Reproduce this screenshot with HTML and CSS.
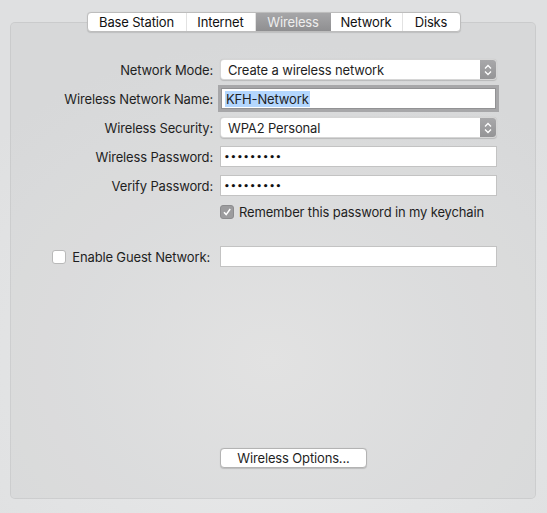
FILE: index.html
```html
<!DOCTYPE html>
<html>
<head>
<meta charset="utf-8">
<link rel="stylesheet" href="styles.css">
</head>
<body>
<div class="window">
  <div class="tabs">
    <div class="tab t-base">Base Station</div>
    <div class="tab t-internet">Internet</div>
    <div class="tab t-wireless active">Wireless</div>
    <div class="tab t-network">Network</div>
    <div class="tab t-disks last">Disks</div>
  </div>
  <div class="panel">
    <div class="form">
      <div class="label">Network Mode:</div>
      <div class="select">
        <span class="value">Create a wireless network</span>
        <span class="stepper"><svg width="8" height="12" viewBox="0 0 8 12"><path d="M1 4.5 L4 1.5 L7 4.5 M1 7.5 L4 10.5 L7 7.5" fill="none" stroke="#fff" stroke-width="1.3"/></svg></span>
      </div>

      <div class="label">Wireless Network Name:</div>
      <div class="field focus"><span class="sel">KFH-Network</span></div>

      <div class="label">Wireless Security:</div>
      <div class="select">
        <span class="value">WPA2 Personal</span>
        <span class="stepper"><svg width="8" height="12" viewBox="0 0 8 12"><path d="M1 4.5 L4 1.5 L7 4.5 M1 7.5 L4 10.5 L7 7.5" fill="none" stroke="#fff" stroke-width="1.3"/></svg></span>
      </div>

      <div class="label">Wireless Password:</div>
      <div class="field"><span class="dots">•••••••••</span></div>

      <div class="label">Verify Password:</div>
      <div class="field"><span class="dots">•••••••••</span></div>

      <div class="spacer"></div>
      <div class="check-row">
        <span class="box checked"><svg width="10" height="10" viewBox="0 0 10 10"><path d="M2 5.2 L4.2 7.6 L8.2 2" fill="none" stroke="#fff" stroke-width="1.5"/></svg></span>
        <span>Remember this password in my keychain</span>
      </div>

      <div class="label guest"><span class="box"></span><span class="guest-text">Enable Guest Network:</span></div>
      <div class="field guest-field"></div>
    </div>
    <div class="actions">
      <div class="button">Wireless Options...</div>
    </div>
  </div>
</div>
</body>
</html>
```

FILE: styles.css
```css
html, body {
  margin: 0;
  padding: 0;
}
body {
  width: 547px;
  height: 513px;
  overflow: hidden;
  font-family: "Inter", "Liberation Sans", sans-serif;
  font-size: 13px;
  letter-spacing: -0.15px;
  color: #1f1f1f;
  background: radial-gradient(ellipse 380px 320px at 270px 360px, #ebebeb 0%, #e3e4e5 60%, #dfe0e1 100%);
}
.window {
  padding: 12px 11px 14px 10px;
  display: flex;
  flex-direction: column;
  height: 513px;
  box-sizing: border-box;
}
.tabs {
  align-self: center;
  display: flex;
  height: 20px;
  background: #fff;
  border: 1px solid #bdbdbd;
  border-radius: 4px;
  box-sizing: border-box;
  position: relative;
  z-index: 1;
  box-shadow: 0 0.5px 1px rgba(0,0,0,0.12);
  overflow: hidden;
  margin-left: 1px;
}
.tab {
  line-height: 18px;
  border-right: 1px solid #e2e2e2;
  color: #111;
  text-align: center;
  white-space: nowrap;
  box-sizing: border-box;
}
.t-base { width: 99px; }
.t-internet { width: 69px; }
.t-wireless { width: 75px; }
.t-network { width: 72px; }
.t-disks { width: 57px; }
.tab.last { border-right: none; }
.tab.active {
  background: linear-gradient(#a6a6a8, #8f8f91);
  color: #eeeeee;
  border-right: none;
}
.panel {
  flex: 1;
  margin-top: -10px;
  background: rgba(0,0,0,0.035);
  border: 1px solid rgba(0,0,0,0.06);
  border-radius: 5px;
  display: flex;
  flex-direction: column;
  padding: 36px 38px 30px 0;
}
.form {
  display: grid;
  grid-template-columns: 202px 277px;
  column-gap: 7px;
  row-gap: 8px;
  align-items: center;
}
.label {
  text-align: right;
  white-space: nowrap;
}
.select {
  height: 21px;
  box-sizing: border-box;
  background: #fff;
  border: 1px solid rgba(0,0,0,0.16);
  border-radius: 4px;
  box-shadow: 0 0.5px 1px rgba(0,0,0,0.15);
  display: flex;
  align-items: center;
  overflow: hidden;
}
.select .value {
  flex: 1;
  padding-left: 7px;
}
.stepper {
  width: 16px;
  align-self: stretch;
  background: linear-gradient(#a8a8aa, #949496);
  display: flex;
  align-items: center;
  justify-content: center;
}
.field {
  height: 21px;
  box-sizing: border-box;
  background: #fff;
  border: 1px solid #c3c3c3;
  display: flex;
  align-items: center;
  padding-left: 3px;
}
.field.focus {
  box-shadow: 0 0 0 3px #a7a7a9;
  border-color: #929294;
  margin: 0 1px;
}
.sel {
  background: #b4d7fe;
  line-height: 16px;
  padding: 0 1px;
}
.dots {
  font-family: "DejaVu Sans", sans-serif;
  font-size: 9px;
  font-weight: bold;
  letter-spacing: 0.7px;
  color: #111;
}
.spacer { height: 16px; }
.check-row {
  display: flex;
  align-items: center;
  gap: 5px;
  height: 16px;
}
.box {
  width: 14px;
  height: 14px;
  box-sizing: border-box;
  border-radius: 3px;
  background: #fff;
  border: 1px solid #b9b9b9;
  display: inline-flex;
  align-items: center;
  justify-content: center;
  flex: none;
}
.box.checked {
  background: #9c9c9e;
  border-color: #8c8c8e;
}
.label.guest {
  display: flex;
  align-items: center;
  margin-top: 18px;
}
.label.guest .box { margin-left: 41px; }
.guest-text { margin-left: auto; margin-right: 3px; }
.guest-field { margin-top: 18px; }
.actions {
  margin-top: auto;
  padding-left: 209px;
  display: flex;
}
.button {
  width: 147px;
  height: 20px;
  box-sizing: border-box;
  background: #fff;
  border: 1px solid #b3b3b3;
  border-radius: 4px;
  box-shadow: 0 0.5px 1px rgba(0,0,0,0.15);
  text-align: center;
  line-height: 18px;
}
```
